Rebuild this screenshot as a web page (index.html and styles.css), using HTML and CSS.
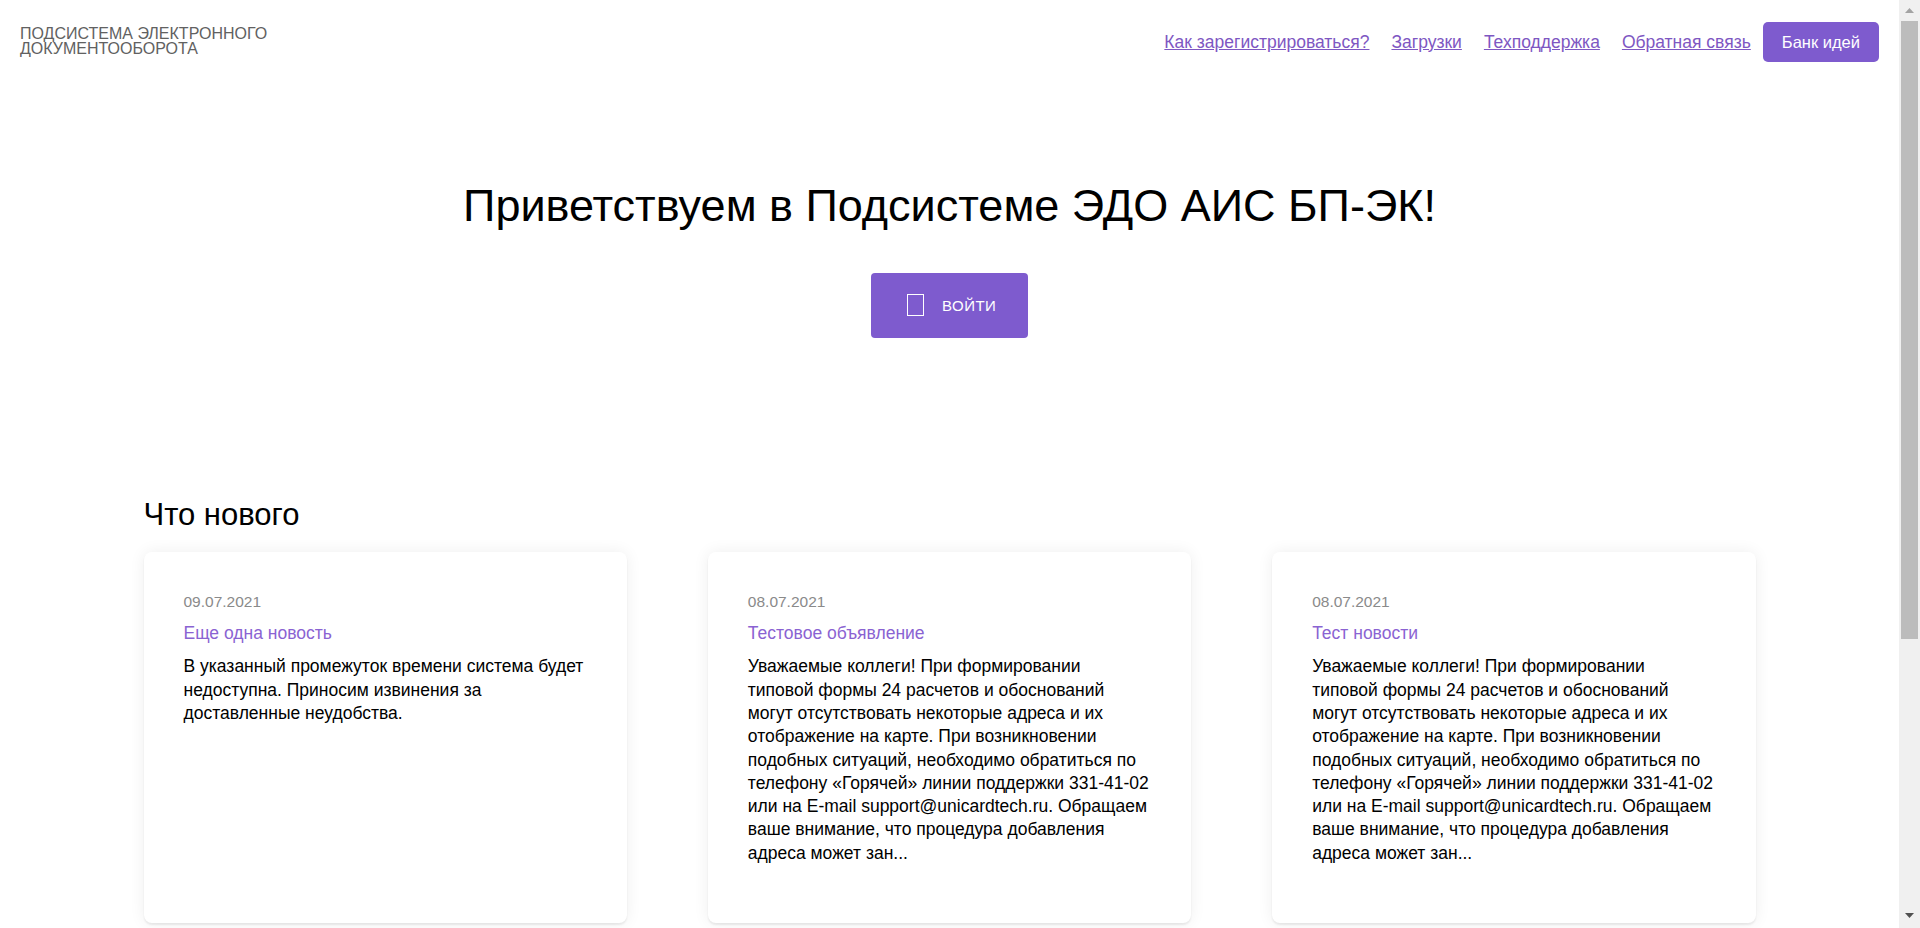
FILE: index.html
```html
<!DOCTYPE html>
<html lang="ru">
<head>
<meta charset="utf-8">
<title>Подсистема ЭДО</title>
<link rel="stylesheet" href="styles.css">
</head>
<body>
<div class="page">
  <header class="topbar">
    <div class="brand">Подсистема электронного<br>документооборота</div>
    <nav class="nav">
      <a class="nav-link" href="#">Как зарегистрироваться?</a>
      <a class="nav-link" href="#">Загрузки</a>
      <a class="nav-link" href="#">Техподдержка</a>
      <a class="nav-link nav-link-last" href="#">Обратная связь</a>
      <a class="nav-btn" href="#">Банк идей</a>
    </nav>
  </header>

  <section class="hero">
    <h1 class="hero-title">Приветствуем в Подсистеме ЭДО АИС БП-ЭК!</h1>
    <a class="login-btn" href="#"><span class="login-icon"></span><span class="login-text">Войти</span></a>
  </section>

  <section class="news">
    <h2 class="news-heading">Что нового</h2>
    <div class="news-grid">
      <article class="card">
        <div class="card-date">09.07.2021</div>
        <div class="card-title">Еще одна новость</div>
        <p class="card-text">В указанный промежуток времени система будет недоступна. Приносим извинения за доставленные неудобства.</p>
      </article>
      <article class="card">
        <div class="card-date">08.07.2021</div>
        <div class="card-title">Тестовое объявление</div>
        <p class="card-text">Уважаемые коллеги! При формировании типовой формы 24 расчетов и обоснований могут отсутствовать некоторые адреса и их отображение на карте. При возникновении подобных ситуаций, необходимо обратиться по телефону «Горячей» линии поддержки 331-41-02 или на E-mail support@unicardtech.ru. Обращаем ваше внимание, что процедура добавления адреса может зан...</p>
      </article>
      <article class="card">
        <div class="card-date">08.07.2021</div>
        <div class="card-title">Тест новости</div>
        <p class="card-text">Уважаемые коллеги! При формировании типовой формы 24 расчетов и обоснований могут отсутствовать некоторые адреса и их отображение на карте. При возникновении подобных ситуаций, необходимо обратиться по телефону «Горячей» линии поддержки 331-41-02 или на E-mail support@unicardtech.ru. Обращаем ваше внимание, что процедура добавления адреса может зан...</p>
      </article>
    </div>
  </section>
</div>

<div class="scrollbar" aria-hidden="true">
  <svg class="scroll-arrow scroll-arrow-up" width="9" height="5" viewBox="0 0 9 5"><polygon points="0,5 4.5,0 9,5" fill="#a3a3a3"/></svg>
  <div class="scroll-thumb"></div>
  <svg class="scroll-arrow scroll-arrow-down" width="9" height="5" viewBox="0 0 9 5"><polygon points="0,0 9,0 4.5,5" fill="#505050"/></svg>
</div>
</body>
</html>
```

FILE: styles.css
```css
html, body {
  margin: 0;
  padding: 0;
  background: #ffffff;
}

body {
  font-family: "Liberation Sans", Arial, sans-serif;
  color: #000000;
}

.page {
  min-height: 1342px;
  margin-right: 21px;
}

/* decorative replica of the browser scrollbar shown in the screenshot */
.scrollbar {
  position: fixed;
  top: 0;
  right: 0;
  width: 21px;
  height: 100vh;
  background: #f0f0f0;
}

.scroll-arrow {
  position: absolute;
  left: 6px;
  display: block;
}

.scroll-arrow-up {
  top: 8px;
}

.scroll-arrow-down {
  bottom: 10px;
}

.scroll-thumb {
  position: absolute;
  top: 21px;
  left: 2px;
  right: 2px;
  height: 618px;
  background: #bcbcbc;
}

.topbar {
  display: flex;
  justify-content: space-between;
  align-items: center;
  padding: 22px 20px 0 20px;
}

.brand {
  font-size: 16px;
  line-height: 15px;
  text-transform: uppercase;
  color: #616161;
  margin-top: -2px;
}

.nav {
  display: flex;
  align-items: center;
}

.nav-link {
  font-size: 17.5px;
  color: #7e57c2;
  text-decoration: underline;
  margin-right: 22px;
}

.nav-link-last {
  margin-right: 12px;
}

.nav-btn {
  display: inline-flex;
  align-items: center;
  justify-content: center;
  height: 40px;
  padding: 0 19px;
  background: #7e5bce;
  color: #ffffff;
  font-size: 16.5px;
  border-radius: 5px;
  text-decoration: none;
}

.hero {
  display: flex;
  flex-direction: column;
  align-items: center;
  padding-top: 118px;
}

.hero-title {
  margin: 0;
  font-size: 45px;
  font-weight: normal;
  line-height: 1.15;
  color: #000000;
}

.login-btn {
  margin-top: 41px;
  display: inline-flex;
  align-items: center;
  box-sizing: border-box;
  width: 157px;
  height: 65px;
  padding: 0 0 0 36px;
  gap: 18px;
  background: #7e5bce;
  color: #ffffff;
  border-radius: 4px;
  text-decoration: none;
}

.login-icon {
  box-sizing: border-box;
  width: 17px;
  height: 22px;
  border: 1.5px solid #ffffff;
  margin-top: -1px;
}

.login-text {
  font-size: 15px;
  letter-spacing: 0.5px;
  text-transform: uppercase;
}

.news {
  width: 1612px;
  margin: 159px auto 0 auto;
}

.news-heading {
  margin: 0 0 20px 0;
  font-size: 31px;
  font-weight: normal;
  line-height: 1.15;
}

.news-grid {
  display: grid;
  grid-template-columns: repeat(3, 1fr);
  gap: 81px;
}

.card {
  box-sizing: border-box;
  height: 371px;
  padding: 41px 41px 0 40px;
  background: #ffffff;
  border-radius: 8px;
  box-shadow: 0 2px 2px rgba(0, 0, 0, 0.07), 0 0 16px rgba(0, 0, 0, 0.07);
}

.card-date {
  font-size: 15.5px;
  line-height: 18px;
  color: #8a8a8a;
}

.card-title {
  margin-top: 12px;
  font-size: 17.5px;
  line-height: 20px;
  color: #8a63d2;
}

.card-text {
  margin: 12px 0 0 0;
  font-size: 17.5px;
  line-height: 23.3px;
  color: #000000;
}
```
